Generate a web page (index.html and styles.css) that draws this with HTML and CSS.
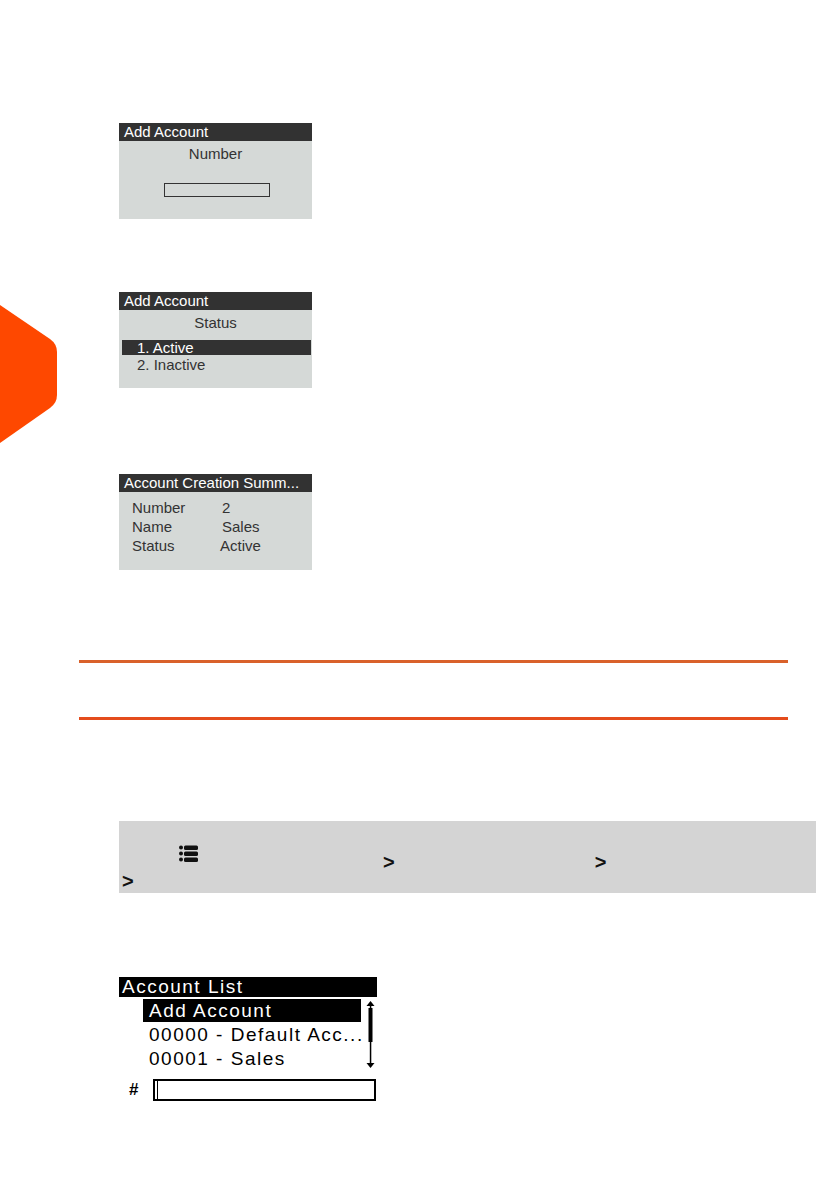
FILE: index.html
```html
<!DOCTYPE html>
<html lang="en">
<head>
<meta charset="utf-8">
<title>Add Account</title>
<link rel="stylesheet" href="styles.css">
</head>
<body>
<div class="page">
  <svg class="side-tab" width="58" height="140" viewBox="0 0 58 140" aria-hidden="true">
    <path d="M0 0 L50 34 Q57 39 57 47 L57 90 Q57 98 50 103 L0 138 Z" fill="#fe4800"/>
  </svg>

  <div class="lcd">
    <div class="lcd-title">Add Account</div>
    <div class="lcd-body">
      <div class="lcd-center">Number</div>
      <div class="lcd-input"></div>
    </div>
  </div>

  <div class="lcd lcd-2">
    <div class="lcd-title">Add Account</div>
    <div class="lcd-body">
      <div class="lcd-center">Status</div>
      <div class="lcd-option lcd-option-selected">1. Active</div>
      <div class="lcd-option">2. Inactive</div>
    </div>
  </div>

  <div class="lcd lcd-3">
    <div class="lcd-title">Account Creation Summ...</div>
    <div class="lcd-body lcd-summary">
      <span>Number</span><span>2</span>
      <span>Name</span><span>Sales</span>
      <span>Status</span><span class="shift">Active</span>
    </div>
  </div>

  <div class="rule rule-top"></div>
  <div class="rule rule-bottom"></div>

  <div class="path-box">
    <div class="path-line"></div>
    <div class="path-line">
      <svg class="menu-icon" width="19" height="18" viewBox="0 0 19 18" aria-hidden="true">
        <circle cx="2" cy="2.5" r="2"/>
        <circle cx="2" cy="8.5" r="2"/>
        <circle cx="2" cy="14.5" r="2"/>
        <rect x="5" y="0.5" width="14" height="4.5" rx="1.5"/>
        <rect x="5" y="6.5" width="14" height="4.5" rx="1.5"/>
        <rect x="5" y="12.5" width="14" height="4.5" rx="1.5"/>
      </svg><span class="chev chev-1">&gt;</span><span class="chev chev-2">&gt;</span>
    </div>
    <div class="path-line"><span class="chev">&gt;</span></div>
  </div>

  <div class="acct">
    <div class="acct-title">Account List</div>
    <div class="acct-list">
      <div class="acct-rows">
        <div class="acct-row acct-row-selected">Add Account</div>
        <div class="acct-row">00000 - Default Acc...</div>
        <div class="acct-row">00001 - Sales</div>
      </div>
      <svg class="acct-scroll" width="11" height="72" viewBox="0 0 11 72" aria-hidden="true">
        <rect x="4.8" y="4" width="1.5" height="62" fill="#000"/>
        <polygon points="5.5,2 1.5,7 9.5,7" fill="#000"/>
        <rect x="3.5" y="9" width="4" height="34" fill="#000"/>
        <polygon points="1.5,64 9.5,64 5.5,69" fill="#000"/>
      </svg>
    </div>
    <div class="acct-entry">
      <span class="acct-hash">#</span>
      <div class="acct-input"><div class="acct-cursor"></div></div>
    </div>
  </div>
</div>
</body>
</html>
```
FILE: styles.css
```css
html, body {
  margin: 0;
  padding: 0;
  background: #ffffff;
}

.page {
  position: relative;
  width: 839px;
  min-height: 1191px;
  padding-top: 123px;
  box-sizing: border-box;
  font-family: "Liberation Sans", Arial, sans-serif;
}

.side-tab {
  position: absolute;
  left: 0;
  top: 305px;
  display: block;
}

/* LCD screens */
.lcd {
  width: 193px;
  margin-left: 119px;
  background: #d5d9d7;
  color: #333333;
}

.lcd-2 {
  margin-top: 73px;
}

.lcd-3 {
  margin-top: 86px;
}

.lcd-title {
  height: 18px;
  line-height: 18px;
  background: #323232;
  color: #ffffff;
  font-size: 15px;
  padding-left: 5px;
  white-space: nowrap;
  overflow: hidden;
}

.lcd-body {
  height: 78px;
  box-sizing: border-box;
  padding-top: 4px;
  font-size: 15px;
}

.lcd-center {
  text-align: center;
  line-height: 18px;
}

.lcd-input {
  width: 106px;
  height: 14px;
  box-sizing: border-box;
  margin: 20px 0 0 45px;
  border: 1.5px solid #333333;
}

.lcd-option {
  line-height: 15px;
  height: 15px;
  margin: 2px 1px 0 3px;
  padding-left: 15px;
}

.lcd-option-selected {
  margin-top: 8px;
  background: #323232;
  color: #ffffff;
}

.lcd-summary {
  display: grid;
  grid-template-columns: 90px auto;
  padding: 6px 0 0 13px;
  line-height: 19px;
  align-content: start;
}

.shift {
  margin-left: -2px;
}

/* Orange rules */
.rule {
  width: 709px;
  height: 3px;
  margin-left: 79px;
}

.rule-top {
  margin-top: 90px;
  background: #d9612a;
}

.rule-bottom {
  margin-top: 54px;
  background: #e44c1c;
}

/* Grey path box */
.path-box {
  width: 697px;
  height: 72px;
  margin: 101px 0 0 119px;
  background: #d4d4d4;
  padding-left: 3px;
  box-sizing: border-box;
  color: #111111;
}

.path-line {
  height: 24px;
  line-height: 24px;
  font-size: 20px;
  font-weight: bold;
  white-space: nowrap;
}

.menu-icon {
  display: inline-block;
  margin-left: 57px;
  vertical-align: 6px;
  fill: #111111;
}

.chev-1 {
  margin-left: 185px;
}

.chev-2 {
  margin-left: 200px;
}

/* Account list screen */
.acct {
  width: 258px;
  margin: 84px 0 0 119px;
  font-size: 19px;
  letter-spacing: 1.5px;
  color: #000000;
}

.acct-title {
  height: 20px;
  line-height: 20px;
  background: #000000;
  color: #ffffff;
  padding-left: 3px;
  white-space: nowrap;
}

.acct-list {
  display: flex;
  align-items: flex-start;
  margin-top: 2px;
  padding-left: 24px;
}

.acct-rows {
  width: 218px;
  display: flex;
  flex-direction: column;
  gap: 1px;
}

.acct-row {
  height: 23px;
  line-height: 23px;
  padding-left: 6px;
  white-space: nowrap;
}

.acct-row-selected {
  background: #000000;
  color: #ffffff;
}

.acct-scroll {
  display: block;
  margin-left: 4px;
}

.acct-entry {
  display: flex;
  align-items: center;
  margin-top: 8px;
}

.acct-hash {
  margin-left: 10px;
  font-size: 17px;
  font-weight: bold;
  letter-spacing: 0;
  width: 14px;
}

.acct-input {
  width: 223px;
  height: 22px;
  margin-left: 10px;
  box-sizing: border-box;
  border: 2px solid #000000;
  display: flex;
}

.acct-cursor {
  width: 0;
  height: 100%;
  margin-left: 2px;
  border-left: 1.5px solid #000000;
}
```
